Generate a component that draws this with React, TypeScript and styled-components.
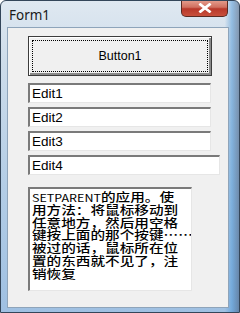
import React from "react";
import styled, { createGlobalStyle } from "styled-components";

const GlobalStyle = createGlobalStyle`
    html, body {
        margin: 0;
        padding: 0;
        width: 240px;
        height: 313px;
        overflow: hidden;
        background: #ffffff;
    }
`;

const memoLines = [
    ["SETPARENT", "的应用。使"],
    ["", "用方法：将鼠标移动到"],
    ["", "任意地方，然后用空格"],
    ["", "键按上面的那个按键……"],
    ["", "被过的话，鼠标所在位"],
    ["", "置的东西就不见了，注"],
    ["", "销恢复"],
];

const App = () => {
    return (
    <>
        <GlobalStyle />
        <Window>
            <TitleBar>
                <Title>Form1</Title>
                <Close>
                    <svg width="16" height="10" viewBox="0 0 16 10">
                        <path d="M3.5 1.5 L12.5 8.5 M12.5 1.5 L3.5 8.5" stroke="#ffffff" strokeWidth="2.8" strokeLinecap="square" />
                    </svg>
                </Close>
            </TitleBar>
            <Client>
                <Button>Button1</Button>
                <Edits>
                    <Edit>Edit1</Edit>
                    <Edit>Edit2</Edit>
                    <Edit>Edit3</Edit>
                    <Edit $wide>Edit4</Edit>
                </Edits>
                <Memo>
                    <MemoText>
                        {memoLines.map(([latin, cjk], i) => (
                            <Line key={i}>
                                {latin && <Latin>{latin}</Latin>}
                                {cjk}
                            </Line>
                        ))}
                    </MemoText>
                </Memo>
            </Client>
        </Window>
    </>
)};

const Window = styled.div`
    box-sizing: border-box;
    width: 240px;
    height: 313px;
    border: 1px solid #34465a;
    border-radius: 6px 6px 0 0;
    background:
        linear-gradient(90deg, rgba(255,255,255,0) 0%, rgba(255,255,255,0) 94%, rgba(60,140,210,0.45) 97%, rgba(30,60,100,0.45) 100%),
        linear-gradient(180deg, #dfe8f1 0%, #cddcea 20%, #b3cde6 60%, #9fc0e2 100%);
    display: flex;
    flex-direction: column;
    overflow: hidden;
`;

const TitleBar = styled.div`
    height: 26px;
    display: flex;
    align-items: flex-start;
    justify-content: space-between;
    padding: 0 11px 0 8px;
`;

const Title = styled.div`
    font-family: "Noto Sans", "Open Sans", sans-serif;
    font-size: 13.5px;
    color: #1a1a1a;
    line-height: 16px;
    margin-top: 6px;
`;

const Close = styled.div`
    width: 47px;
    height: 17px;
    margin-top: -1px;
    box-sizing: border-box;
    border: 1px solid #5a2a22;
    border-top: none;
    border-radius: 0 0 5px 5px;
    background: linear-gradient(180deg, #e6a090 0%, #d07060 45%, #b8382a 55%, #c8503c 100%);
    display: flex;
    align-items: center;
    justify-content: center;
`;

const Client = styled.div`
    flex: 1;
    margin: 0 10px 4px 6px;
    background: #f0f0f0;
    border: 1px solid #8ea4ba;
    padding: 8px 0 0 20px;
    display: flex;
    flex-direction: column;
    align-items: flex-start;
`;

const Button = styled.button`
    position: relative;
    box-sizing: border-box;
    width: 184px;
    height: 40px;
    margin: 0;
    padding: 0;
    background: #f0f0f0;
    border: 1px solid #3c3c3c;
    box-shadow: inset 1px 1px #ffffff, inset -2px -2px #8a8a8a;
    font-family: "Liberation Sans", Arial, sans-serif;
    font-size: 12.5px;
    color: #000000;

    &::after {
        content: "";
        position: absolute;
        left: 3px;
        top: 3px;
        right: 3px;
        bottom: 3px;
        border: 1px dotted #000000;
    }
`;

const Edits = styled.div`
    display: flex;
    flex-direction: column;
    gap: 4px;
    margin-top: 7px;
`;

const Edit = styled.div<{ $wide?: boolean }>`
    box-sizing: border-box;
    width: ${(p) => (p.$wide ? "192px" : "183px")};
    height: 20px;
    background: #ffffff;
    border-top: 2px solid #7a7a7a;
    border-left: 2px solid #7a7a7a;
    border-bottom: 1px solid #e6e6e6;
    border-right: 1px solid #e6e6e6;
    padding: 0 0 0 2px;
    font-family: "Liberation Sans", Arial, sans-serif;
    font-size: 13.5px;
    line-height: 17px;
    color: #000000;
`;

const Memo = styled.div`
    box-sizing: border-box;
    width: 164px;
    height: 104px;
    margin-top: 12px;
    background: #ffffff;
    border-top: 2px solid #7a7a7a;
    border-left: 2px solid #7a7a7a;
    border-bottom: 1px solid #e6e6e6;
    border-right: 1px solid #e6e6e6;
    padding: 2px 0 0 2px;
    overflow: hidden;
`;

/* the reference is stretched sideways, so the memo text is too */
const MemoText = styled.div`
    transform: scaleX(1.18);
    transform-origin: left top;
    font-family: "Noto Sans CJK SC", sans-serif;
    font-weight: 500;
    font-size: 12.4px;
    line-height: 12.8px;
    color: #000000;
`;

const Line = styled.div`
    white-space: nowrap;
    height: 12.8px;
`;

const Latin = styled.span`
    font-weight: 400;
    font-size: 10.6px;
`;

export default App;
